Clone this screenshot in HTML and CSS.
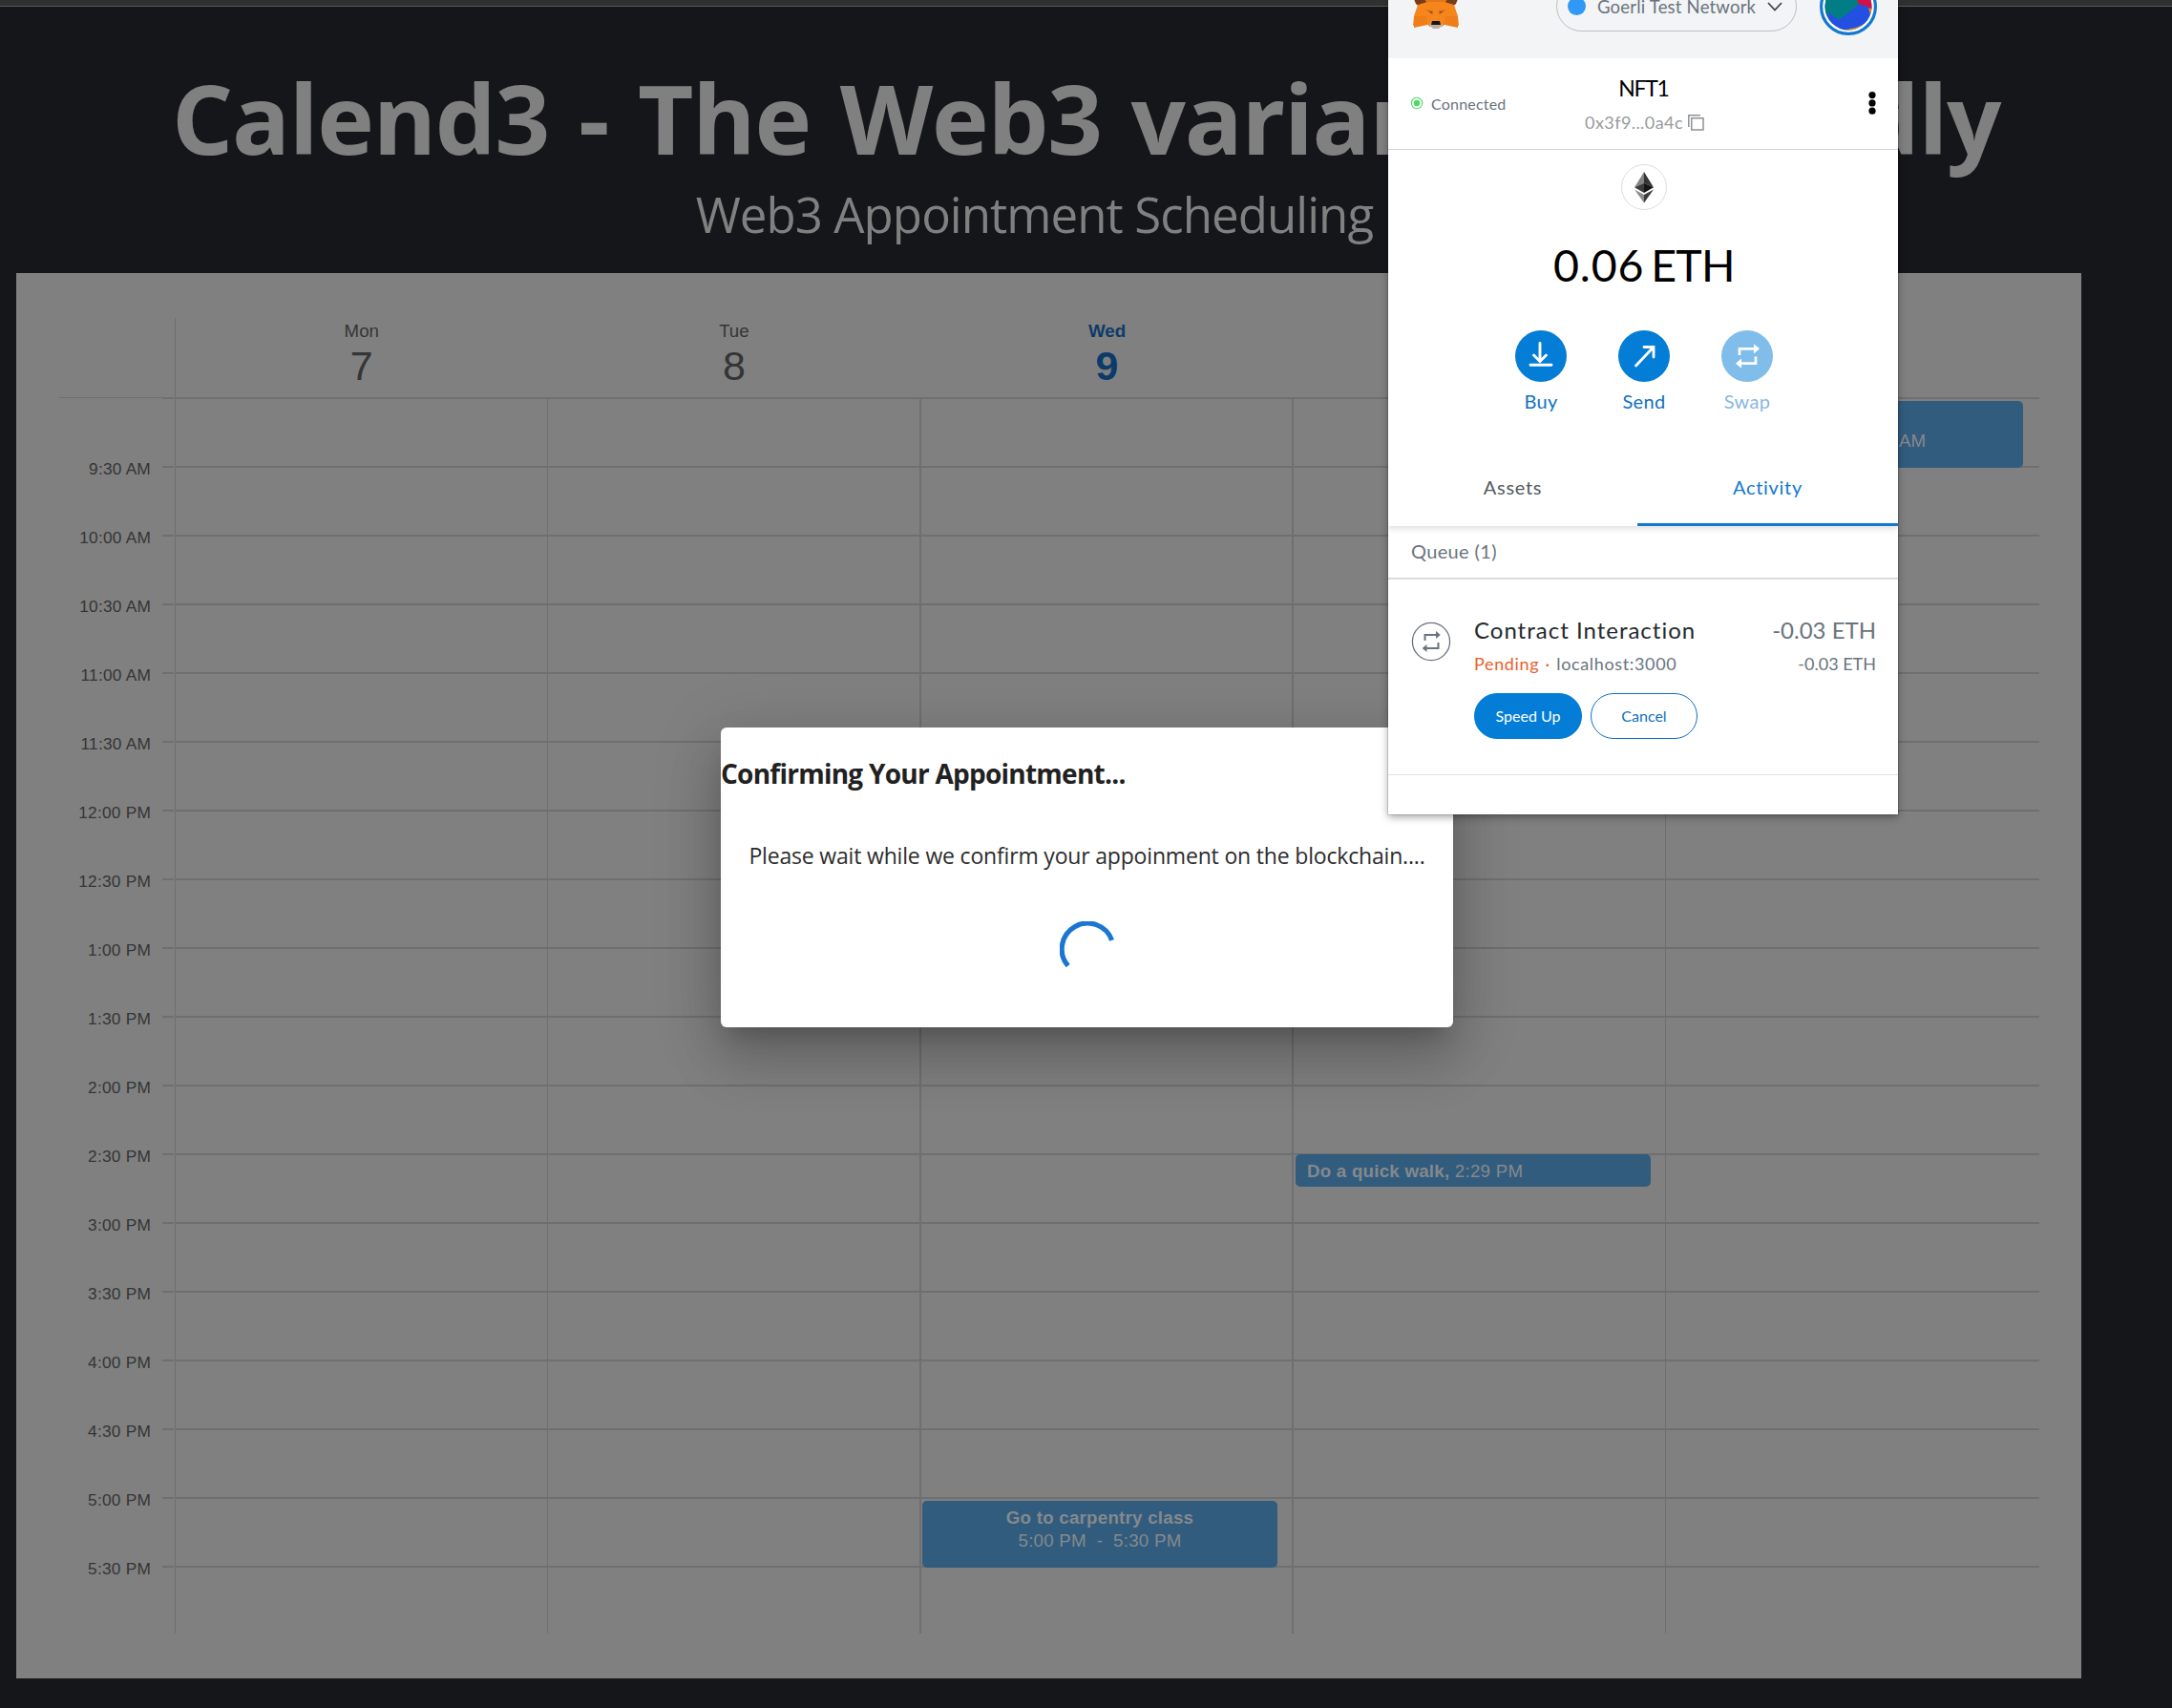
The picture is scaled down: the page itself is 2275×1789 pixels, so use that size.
FILE: index.html
```html
<!DOCTYPE html>
<html lang="en">
<head>
<meta charset="utf-8">
<title>Calend3</title>
<link rel="stylesheet" href="styles.css">
</head>
<body>
<div class="app">
  <div class="chrome-strip"></div>
  <header class="hero">
    <h1 class="hero-title">Calend3 - The Web3 variant <span class="tail">of Calendly</span></h1>
    <p class="hero-sub">Web3 Appointment Scheduling <span class="sub-tail">App</span></p>
  </header>

  <main class="calendar">
    <div class="cal-head">
      <div class="corner"></div>
      <div class="day first"><span class="dow">Mon</span><span class="num">7</span></div>
      <div class="day"><span class="dow">Tue</span><span class="num">8</span></div>
      <div class="day today"><span class="dow">Wed</span><span class="num">9</span></div>
      <div class="day"><span class="dow">Thu</span><span class="num">10</span></div>
      <div class="day"><span class="dow">Fri</span><span class="num">11</span></div>
    </div>
    <div class="cal-body">
      <div class="times">
        <span>9:30 AM</span><span>10:00 AM</span><span>10:30 AM</span><span>11:00 AM</span><span>11:30 AM</span><span>12:00 PM</span><span>12:30 PM</span><span>1:00 PM</span><span>1:30 PM</span><span>2:00 PM</span><span>2:30 PM</span><span>3:00 PM</span><span>3:30 PM</span><span>4:00 PM</span><span>4:30 PM</span><span>5:00 PM</span><span>5:30 PM</span>
      </div>
      <div class="col"></div>
      <div class="col"></div>
      <div class="col strong">
        <div class="event carpentry"><b>Go to carpentry class</b><span>5:00 PM&nbsp; -&nbsp; 5:30 PM</span></div>
      </div>
      <div class="col strong">
        <div class="event walk"><b>Do a quick walk,</b> 2:29 PM</div>
      </div>
      <div class="col">
        <div class="event morning"><b>Meeting</b><span>9:00 AM&nbsp; -&nbsp; 9:30 AM</span></div>
      </div>
    </div>
  </main>

  <section class="dialog">
    <h2 class="dialog-title">Confirming Your Appointment...</h2>
    <p class="dialog-text">Please wait while we confirm your appoinment on the blockchain....</p>
    <svg class="spinner" width="58" height="58" viewBox="0 0 58 58"><path d="M54.600 19.900A27 27 0 1 0 8.700 46.600" fill="none" stroke="#1976d2" stroke-width="5.200"/></svg>
  </section>

  <aside class="wallet">
    <div class="w-top">
      <svg class="fox" width="50" height="32" viewBox="0 0 50 32">
        <path d="M2 0h46l-2 5-4 3H8L4 5z" fill="#763d16"/>
        <path d="M13 0h24l-3 5H16z" fill="#e2761b"/>
        <path d="M6 6l10-3h18l10 3 4 12 1 10-14-2-4 3H19l-4-3-14 2 1-10z" fill="#f6851b"/>
        <path d="M2 18h13l1 9-14 3zM48 18H35l-1 9 14 3z" fill="#ee7d1a"/>
        <path d="M14 11l8 1v4zM36 11l-8 1v4z" fill="#dd6a18"/>
        <path d="M17 13l4 .5v2zM33 13l-4 .5v2z" fill="#7b4a33"/>
        <path d="M18 27l3-3h8l3 3-4 4h-6z" fill="#c0ad9e"/>
        <path d="M21 23h8l1 4h-10z" fill="#161616"/>
      </svg>
      <div class="network"><i class="net-dot"></i><span>Goerli Test Network</span>
        <svg width="16" height="10" viewBox="0 0 16 10"><path d="M1 1l7 7.5L15 1" fill="none" stroke="#3c4249" stroke-width="1.7"/></svg>
      </div>
      <svg class="avatar" width="60" height="60" viewBox="0 0 60 60">
        <defs><clipPath id="face"><circle cx="30" cy="30" r="24.500"/></clipPath></defs>
        <circle cx="30" cy="30" r="28.4" fill="#fff" stroke="#1379d0" stroke-width="3.2"/>
        <g clip-path="url(#face)">
          <path d="M0 0h60v60H0z" fill="#2450e1"/>
          <path d="M0 0h38l4 27-22 17-8-6H0z" fill="#027d86"/>
          <path d="M38 0h22v36L40 27z" fill="#d01346"/>
          <path d="M40 26l14 6v4z" fill="#2450e1"/>
          <path d="M51 31l6 3v7l-4-3z" fill="#f5830f"/>
          <path d="M24 55l14-3 12-5v13H24z" fill="#f5a31a"/>
        </g>
      </svg>
    </div>

    <div class="w-account">
      <div class="connected"><svg width="14" height="14" viewBox="0 0 14 14"><circle cx="7" cy="7" r="5.7" fill="#fff" stroke="#4cd964" stroke-width="1.1"/><circle cx="7" cy="7" r="3.2" fill="#4cd964"/></svg><span>Connected</span></div>
      <div class="account">
        <div class="acc-name">NFT1</div>
        <div class="acc-addr"><span>0x3f9...0a4c</span><svg width="17" height="17" viewBox="0 0 17 17" fill="none" stroke="#8f9296" stroke-width="1.5"><path d="M3.8 3.8h12.2v12.2H3.8z"/><path d="M.8 13V.8H13"/></svg></div>
      </div>
      <svg class="kebab" width="8" height="26" viewBox="0 0 8 26"><circle cx="4" cy="4.6" r="3.6"/><circle cx="4" cy="12.9" r="3.6"/><circle cx="4" cy="21.2" r="3.6"/></svg>
    </div>

    <div class="w-balance">
      <svg width="50" height="50" viewBox="0 0 50 50">
        <circle cx="25" cy="25" r="23.5" fill="#fff" stroke="#dcdee0"/>
        <path d="M25 9L15 25.3l10-4.5z" fill="#828384"/><path d="M25 9l10 16.3-10-4.5z" fill="#343434"/>
        <path d="M15 25.3L25 20.8V31z" fill="#3c3c3b"/><path d="M35 25.3L25 20.8V31z" fill="#141414"/>
        <path d="M15 27.5L25 33v8.500z" fill="#8c8c8c"/><path d="M35 27.5L25 33v8.500z" fill="#3c3c3b"/>
      </svg>
      <div class="amount"><span>0.06</span><span class="unit">ETH</span></div>
      <div class="actions">
        <div class="action"><svg width="54" height="54" viewBox="0 0 54 54"><circle cx="27" cy="27" r="27" fill="#037dd6"/><path d="M26 13.500V32M19.500 26L26 32.500 32.500 26M16 36.300h22" fill="none" stroke="#fff" stroke-width="2.900" stroke-linecap="round"/></svg><span>Buy</span></div>
        <div class="action"><svg width="54" height="54" viewBox="0 0 54 54"><circle cx="27" cy="27" r="27" fill="#037dd6"/><path d="M18.500 37L36.500 18M27 17.500h10V28" fill="none" stroke="#fff" stroke-width="2.800" stroke-linecap="round"/></svg><span>Send</span></div>
        <div class="action off"><svg width="54" height="54" viewBox="0 0 54 54"><circle cx="27" cy="27" r="27" fill="#037dd6"/><path d="M19 26v-6.700h17M36 27.500v7.200H19" fill="none" stroke="#fff" stroke-width="2.700"/><path d="M34 14.200l6 5.100-6 5.100zM21 29.600l-6 5.100 6 5.100z" fill="#fff"/></svg><span>Swap</span></div>
      </div>
    </div>

    <div class="tabs"><div class="tab assets">Assets</div><div class="tab on">Activity</div></div>
    <div class="queue">Queue (1)</div>

    <div class="tx">
      <svg class="tx-icon" width="42" height="42" viewBox="0 0 42 42"><circle cx="21" cy="21" r="19.600" fill="none" stroke="#6a737d" stroke-width="1.300"/><path d="M14.500 20v-6h13M28.500 22v6h-13" fill="none" stroke="#6a737d" stroke-width="2"/><path d="M26 10l4.800 4-4.800 4zM16.500 24l-4.800 4 4.800 4z" fill="#6a737d"/></svg>
      <div class="tx-main">
        <div class="tx-title">Contract Interaction</div>
        <div class="tx-sub"><span class="pending">Pending</span><span class="sep">·</span><span class="host">localhost:3000</span></div>
        <div class="tx-btns"><div class="btn primary">Speed Up</div><div class="btn">Cancel</div></div>
      </div>
      <div class="tx-amt"><div class="amt-big">-0.03 ETH</div><div class="amt-small">-0.03 ETH</div></div>
    </div>
  </aside>
</div>
</body>
</html>
```
FILE: styles.css
```css
* { box-sizing: border-box; }
body { margin: 0; background: #151619; }
h1, h2, p { margin: 0; }
svg { display: block; flex: none; }

.app { position: relative; height: 1789px; overflow: hidden; background: #151619; font-family: "Liberation Sans", Arial, sans-serif; }
.chrome-strip { height: 7px; background: #2f3130; border-bottom: 1px solid #5a5b5c; }

.hero { height: 279px; width: 2275px; padding-top: 47px; font-family: "Open Sans", "Noto Sans", sans-serif; color: #808080; white-space: nowrap; }
.hero-title { padding-left: 180px; font-size: 101px; line-height: 138px; font-weight: 700; letter-spacing: -1.28px; word-spacing: 6px; }
.tail { margin-left: -32px; }
.hero-sub { width: 2281px; font-size: 51px; line-height: 70px; letter-spacing: -0.95px; text-align: center; margin-top: -3px; }
.sub-tail { margin-left: 10px; }

.calendar { margin-left: 17px; width: 2163px; height: 1472px; background: #808080; padding: 47px 44px 0 45px; }
.cal-head { display: grid; grid-template-columns: 121px repeat(5, 1fr); height: 84px; border-bottom: 1px solid #6f6f6f; }
.day { display: flex; flex-direction: column; align-items: center; color: #353535; padding-top: 3px; }
.day.first { border-left: 1px solid #6f6f6f; }
.dow { font-size: 18.7px; line-height: 22px; }
.num { font-size: 43px; line-height: 50px; }
.today { color: #0d3b69; font-weight: 700; }

.cal-body { display: grid; grid-template-columns: 121px 390px 390px 390px 391px 1fr; height: 1294px; }
.times { display: flex; flex-direction: column; align-items: flex-end; padding: 38px 25px 0 0; font-size: 17.3px; letter-spacing: 0.22px; color: #353535; background: linear-gradient(transparent 70px, #6f6f6f 70px) 108px 1px / 12px 72px repeat-y; }
.times span { height: 72px; line-height: 72px; }
.col { position: relative; border-left: 1px solid #6f6f6f; background: linear-gradient(transparent 70px, #6f6f6f 70px) 0 1px / 100% 72px repeat-y; }
.col.strong { border-left-width: 2px; }

.event { position: absolute; left: 1px; width: 372px; border-radius: 5px; background: #325c7e; color: #85898c; font-size: 18.7px; line-height: 24px; letter-spacing: 0.25px; white-space: pre; overflow: hidden; }
.event b { letter-spacing: 0.25px; }
.carpentry, .morning { display: flex; flex-direction: column; align-items: center; height: 70px; padding-top: 6px; }
.carpentry { top: 1155px; }
.morning { top: 3px; left: 2px; }
.walk { top: 792px; left: 2px; height: 34px; line-height: 35px; padding-left: 12px; }

.dialog { position: absolute; left: 755px; top: 762px; width: 767px; height: 314px; padding-top: 28px; border-radius: 6px; background: #fff; color: #212121; font-family: "Open Sans", "Noto Sans", sans-serif; white-space: nowrap; display: flex; flex-direction: column; align-items: center; box-shadow: 0 16px 22px -10px rgba(0,0,0,.2), 0 35px 55px 4px rgba(0,0,0,.14), 0 13px 66px 11px rgba(0,0,0,.12); }
.dialog-title { align-self: flex-start; font-size: 28px; line-height: 40px; font-weight: 700; letter-spacing: -0.75px; }
.dialog-text { font-size: 23px; line-height: 34px; letter-spacing: -0.18px; margin-top: 49px; color: #2d2d2d; }
.spinner { margin-top: 52px; }

.wallet { position: absolute; left: 1454px; top: 0; width: 534px; height: 853px; background: #fff; font-family: Lato, "Open Sans", sans-serif; white-space: nowrap; box-shadow: 0 0 0 1px rgba(0,0,0,.12), 0 3px 8px rgba(0,0,0,.35); }
.w-top { height: 61px; background: #f2f4f6; display: flex; }
.fox { margin: -1px 0 0 25px; }
.network { margin: -20px 0 0 101px; width: 252px; height: 53px; border: 1px solid #bbc0c5; border-radius: 27px; display: flex; align-items: center; padding: 0 14px 0 11px; font-size: 18.5px; color: #6a737d; }
.network span { margin: 0 auto 0 12px; letter-spacing: 0.2px; }
.net-dot { width: 19px; height: 19px; border-radius: 50%; background: #3098f5; }
.avatar { margin: -23px 0 0 24px; }

.w-account { height: 96px; border-bottom: 1px solid #d2d5d8; display: grid; grid-template-columns: 170px 1fr 170px; padding: 0 23px; }
.connected { display: flex; align-items: center; align-self: center; gap: 8px; font-size: 16px; letter-spacing: 0.2px; color: #6a737d; padding-bottom: 1px; }
.account { display: flex; flex-direction: column; align-items: center; padding-top: 17px; margin-left: 1px; }
.acc-name { font-size: 23px; line-height: 29px; letter-spacing: -1.3px; color: #000; }
.acc-addr { display: flex; align-items: center; gap: 5px; font-size: 18px; line-height: 24px; letter-spacing: 0.42px; color: #989a9d; margin-top: 9px; margin-left: 2px; }
.kebab { justify-self: end; align-self: center; margin-bottom: 1px; }

.w-balance { height: 315px; padding-top: 14px; display: flex; flex-direction: column; align-items: center; }
.w-balance > svg { margin-left: 2px; }
.amount { display: flex; gap: 7px; font-size: 46.5px; line-height: 56px; margin-top: 28px; padding-left: 2px; color: #000; }
.amount span { letter-spacing: 0.8px; }
.amount .unit { letter-spacing: -0.7px; }
.actions { display: flex; gap: 54px; margin-top: 41px; padding-left: 2px; }
.action { width: 54px; display: flex; flex-direction: column; align-items: center; gap: 7px; font-size: 20px; line-height: 26px; letter-spacing: 0.3px; color: #1070c4; }
.off { opacity: .5; }

.tabs { display: flex; height: 79px; clip-path: inset(0 0 -12px 0); box-shadow: 0 3px 6px rgba(0,0,0,.12); font-size: 20px; color: #535a61; text-align: center; }
.tab { line-height: 76px; letter-spacing: 0.7px; }
.assets { width: 261px; }
.on { width: 273px; color: #1379d0; border-bottom: 3px solid #1379d0; }
.queue { height: 56px; border-bottom: 2px solid #d8dadd; padding: 0 24px; font-size: 20px; line-height: 52px; letter-spacing: 0.35px; color: #6a737d; }

.tx { height: 205px; border-bottom: 1px solid #dfe1e4; padding: 37px 23px 0 24px; display: flex; }
.tx-icon { margin-top: 7px; }
.tx-main { margin-left: 24px; }
.tx-title { font-size: 24px; line-height: 32px; letter-spacing: 1px; color: #24292e; }
.tx-sub { display: flex; font-size: 18px; line-height: 24px; letter-spacing: 0.65px; color: #6a737d; margin-top: 7px; }
.pending { color: #e8602c; }
.sep { color: #e8602c; width: 18px; text-align: center; }
.tx-btns { display: flex; gap: 9px; margin-top: 19px; }
.btn { width: 112px; height: 48px; border: 1px solid #1070c4; border-radius: 24px; color: #1070c4; font-size: 16px; line-height: 46px; text-align: center; }
.primary { width: 113px; background: #037dd6; border-color: #037dd6; color: #fff; }
.tx-amt { margin-left: auto; text-align: right; color: #6a737d; }
.amt-big { font-size: 24px; line-height: 32px; }
.amt-small { font-size: 18px; line-height: 24px; margin-top: 7px; }
```
